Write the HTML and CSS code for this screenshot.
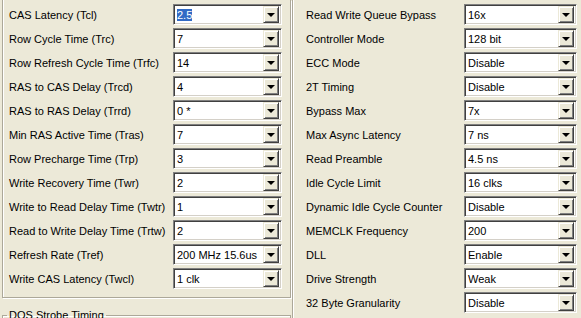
FILE: index.html
```html
<!DOCTYPE html>
<html>
<head>
  <title>Memory Timings</title>
  <link rel="stylesheet" href="styles.css">
</head>
<body>
  <div class="panes">
    <div class="left-pane">
      <div class="group timings">
        <div class="row"><span class="label">CAS Latency (Tcl)</span><div class="combo"><span class="value"><span class="selected">2.5</span></span><span class="drop"></span></div></div>
        <div class="row"><span class="label">Row Cycle Time (Trc)</span><div class="combo"><span class="value">7</span><span class="drop"></span></div></div>
        <div class="row"><span class="label">Row Refresh Cycle Time (Trfc)</span><div class="combo"><span class="value">14</span><span class="drop"></span></div></div>
        <div class="row"><span class="label">RAS to CAS Delay (Trcd)</span><div class="combo"><span class="value">4</span><span class="drop"></span></div></div>
        <div class="row"><span class="label">RAS to RAS Delay (Trrd)</span><div class="combo"><span class="value">0 *</span><span class="drop"></span></div></div>
        <div class="row"><span class="label">Min RAS Active Time (Tras)</span><div class="combo"><span class="value">7</span><span class="drop"></span></div></div>
        <div class="row"><span class="label">Row Precharge Time (Trp)</span><div class="combo"><span class="value">3</span><span class="drop"></span></div></div>
        <div class="row"><span class="label">Write Recovery Time (Twr)</span><div class="combo"><span class="value">2</span><span class="drop"></span></div></div>
        <div class="row"><span class="label">Write to Read Delay Time (Twtr)</span><div class="combo"><span class="value">1</span><span class="drop"></span></div></div>
        <div class="row"><span class="label">Read to Write Delay Time (Trtw)</span><div class="combo"><span class="value">2</span><span class="drop"></span></div></div>
        <div class="row"><span class="label">Refresh Rate (Tref)</span><div class="combo"><span class="value">200 MHz 15.6us</span><span class="drop"></span></div></div>
        <div class="row"><span class="label">Write CAS Latency (Twcl)</span><div class="combo"><span class="value">1 clk</span><span class="drop"></span></div></div>
      </div>
      <fieldset class="group dqs">
        <legend>DQS Strobe Timing</legend>
      </fieldset>
    </div>

    <div class="right-pane">
      <div class="row"><span class="label">Read Write Queue Bypass</span><div class="combo wide"><span class="value">16x</span><span class="drop"></span></div></div>
      <div class="row"><span class="label">Controller Mode</span><div class="combo wide"><span class="value">128 bit</span><span class="drop"></span></div></div>
      <div class="row"><span class="label">ECC Mode</span><div class="combo wide"><span class="value">Disable</span><span class="drop"></span></div></div>
      <div class="row"><span class="label">2T Timing</span><div class="combo wide"><span class="value">Disable</span><span class="drop"></span></div></div>
      <div class="row"><span class="label">Bypass Max</span><div class="combo wide"><span class="value">7x</span><span class="drop"></span></div></div>
      <div class="row"><span class="label">Max Async Latency</span><div class="combo wide"><span class="value">7 ns</span><span class="drop"></span></div></div>
      <div class="row"><span class="label">Read Preamble</span><div class="combo wide"><span class="value">4.5 ns</span><span class="drop"></span></div></div>
      <div class="row"><span class="label">Idle Cycle Limit</span><div class="combo wide"><span class="value">16 clks</span><span class="drop"></span></div></div>
      <div class="row"><span class="label">Dynamic Idle Cycle Counter</span><div class="combo wide"><span class="value">Disable</span><span class="drop"></span></div></div>
      <div class="row"><span class="label">MEMCLK Frequency</span><div class="combo wide"><span class="value">200</span><span class="drop"></span></div></div>
      <div class="row"><span class="label">DLL</span><div class="combo wide"><span class="value">Enable</span><span class="drop"></span></div></div>
      <div class="row"><span class="label">Drive Strength</span><div class="combo wide"><span class="value">Weak</span><span class="drop"></span></div></div>
      <div class="row"><span class="label">32 Byte Granularity</span><div class="combo wide"><span class="value">Disable</span><span class="drop"></span></div></div>
    </div>
  </div>
</body>
</html>
```

FILE: styles.css
```css
/* XP style dialog */
body {
  margin: 0;
  background: #ece9d8;
  font-family: "Liberation Sans", Arial, sans-serif;
  font-size: 11px;
  color: #000;
  overflow: hidden;
}
.panes {
  display: flex;
  height: 318px;
  overflow: hidden;
}
.left-pane {
  width: 289px;
  padding-left: 2px;
}
.timings {
  border-left: 1px solid #aca899;
  border-right: 1px solid #aca899;
  border-bottom: 1px solid #aca899;
  box-shadow: inset 1px 0 0 #fff, 1px 1px 0 #fff;
  padding: 4px 8px 8px 6px;
  display: flex;
  flex-direction: column;
  gap: 3px;
}
.dqs {
  margin: 11px 0 0 0;
  padding: 0;
  border: 1px solid #aca899;
  border-bottom: none;
  box-shadow: inset 1px 1px 0 #fff;
  height: 20px;
}
.dqs legend {
  padding: 0 2px;
  margin-left: 4px;
  font-size: 11px;
}
.right-pane {
  flex: 1;
  border-left: 1px solid #aca899;
  box-shadow: inset 1px 0 0 #fff;
  margin-left: 1px;
  padding: 4px 4px 0 13px;
  display: flex;
  flex-direction: column;
  gap: 3px;
}
.row {
  display: flex;
  align-items: center;
  justify-content: space-between;
  height: 21px;
  flex-shrink: 0;
}
.label {
  white-space: nowrap;
}
.combo {
  width: 109px;
  height: 21px;
  box-sizing: border-box;
  background: #fff;
  border: 1px solid;
  border-color: #808080 #fff #fff #808080;
  box-shadow: inset 1px 1px 0 #404040, inset -1px -1px 0 #d4d0c8;
  display: flex;
  align-items: center;
  padding: 2px;
}
.combo.wide {
  width: 113px;
}
.value {
  flex: 1;
  padding-left: 1px;
  white-space: nowrap;
  overflow: hidden;
}
.selected {
  background: #316ac5;
  color: #fff;
}
.drop {
  width: 16px;
  height: 17px;
  box-sizing: border-box;
  background: #ece9d8;
  border: 1px solid;
  border-color: #ece9d8 #404040 #404040 #ece9d8;
  box-shadow: inset 1px 1px 0 #fff, inset -1px -1px 0 #808080;
  display: flex;
  align-items: center;
  justify-content: center;
}
.drop::after {
  content: "";
  border-left: 4px solid transparent;
  border-right: 4px solid transparent;
  border-top: 4px solid #000;
  margin-top: 1px;
}
```
